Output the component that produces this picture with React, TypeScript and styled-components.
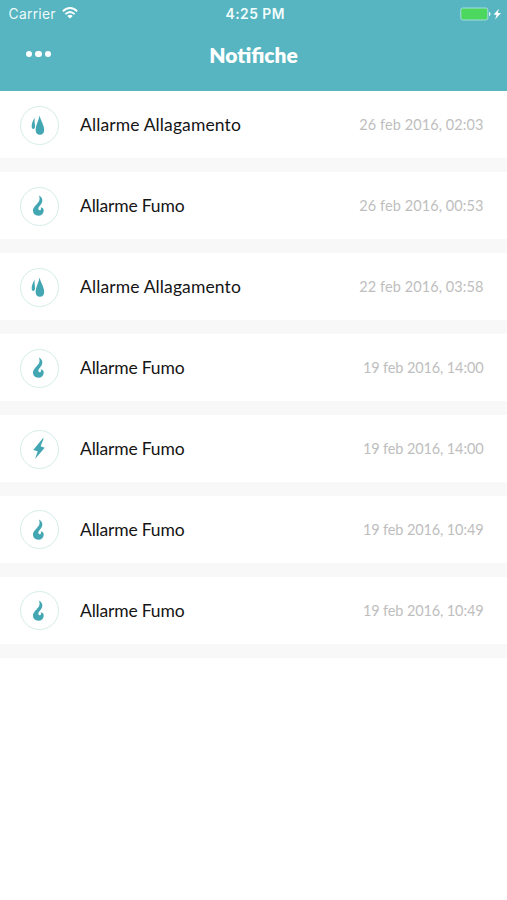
import React from 'react';
import styled, { createGlobalStyle } from 'styled-components';

type AlarmKind = 'flood' | 'smoke' | 'power';

interface Notification {
  id: number;
  kind: AlarmKind;
  title: string;
  date: string;
}

const notifications: Notification[] = [
  { id: 1, kind: 'flood', title: 'Allarme Allagamento', date: '26 feb 2016, 02:03' },
  { id: 2, kind: 'smoke', title: 'Allarme Fumo', date: '26 feb 2016, 00:53' },
  { id: 3, kind: 'flood', title: 'Allarme Allagamento', date: '22 feb 2016, 03:58' },
  { id: 4, kind: 'smoke', title: 'Allarme Fumo', date: '19 feb 2016, 14:00' },
  { id: 5, kind: 'power', title: 'Allarme Fumo', date: '19 feb 2016, 14:00' },
  { id: 6, kind: 'smoke', title: 'Allarme Fumo', date: '19 feb 2016, 10:49' },
  { id: 7, kind: 'smoke', title: 'Allarme Fumo', date: '19 feb 2016, 10:49' },
];

const GlobalStyle = createGlobalStyle`
  * { box-sizing: border-box; }
  body { margin: 0; background: #fff; }
`;

const Screen = styled.div`
  min-height: 900px;
  background: #fff;
  font-family: Lato, 'Open Sans', sans-serif;
`;

const Header = styled.header`
  height: 91px;
  background: #56b5c1;
  color: #fff;
`;

const StatusBar = styled.div`
  display: grid;
  grid-template-columns: 1fr auto 1fr;
  align-items: center;
  height: 28px;
  padding: 0 5px 0 8.5px;
  font-family: Inter, sans-serif;
  line-height: 28px;
`;

const Carrier = styled.div`
  display: flex;
  align-items: center;
  gap: 6px;
  font-size: 13.8px;
  letter-spacing: 0.3px;
  color: #eefafa;

  svg {
    margin-bottom: 2px;
  }
`;

const Clock = styled.div`
  font-size: 13.8px;
  font-weight: 600;
  letter-spacing: 0.5px;
  color: #f2fdfd;
`;

const Power = styled.div`
  display: flex;
  justify-content: flex-end;
  align-items: center;
  padding-bottom: 1px;
`;

const NavBar = styled.div`
  display: grid;
  grid-template-columns: 1fr auto 1fr;
  align-items: center;
  height: 53px;
  padding: 0 24px;
`;

const MenuButton = styled.button`
  display: flex;
  gap: 3px;
  width: 29px;
  height: 24px;
  padding: 0 0 1px 1.5px;
  align-items: center;
  border: 0;
  background: none;
`;

const MenuDot = styled.span`
  flex: none;
  width: 6.6px;
  height: 6.6px;
  border-radius: 50%;
  background: #fff;
`;

const Title = styled.h1`
  margin: 0;
  font-size: 21px;
  font-weight: 800;
  line-height: 28px;
`;

const List = styled.ul`
  margin: 0;
  padding: 0;
  list-style: none;
`;

const Row = styled.li`
  display: flex;
  align-items: center;
  height: 80.95px;
  padding: 1.6px 23.5px 0 19.5px;
  border-bottom: 14px solid #f8f8f8;
`;

const IconRing = styled.span`
  display: flex;
  width: 39px;
  height: 39px;
  margin-right: 21.5px;
  border: 1.5px solid #d5edea;
  border-radius: 50%;
  align-items: center;
  justify-content: center;
`;

const Label = styled.span<{ $tracking: number }>`
  flex: 1;
  font-size: 17.5px;
  line-height: 24px;
  color: #151515;
  letter-spacing: ${({ $tracking }) => $tracking}px;
`;

const Timestamp = styled.time<{ $tight: boolean }>`
  font-size: 14.5px;
  line-height: 20px;
  color: #bebebe;
  letter-spacing: ${({ $tight }) => ($tight ? '-0.12px' : '0.08px')};
`;

const labelTracking: Record<AlarmKind, number> = { flood: 0.12, smoke: -0.18, power: -0.18 };

const glyphs: Record<AlarmKind, React.ReactNode> = {
  flood: (
    <>
      <path d="M16.600 6.500c.8 4.600 4.600 9.600 4.600 14.200 0 3.200-1.700 5.100-4.300 5.100s-4.300-1.900-4.300-5.100c0-4.600 3.300-9.500 4-14.200z" />
      <path d="M11.700 8.800c-1.800 2.600-3 5.700-3 8.500 0 1.700.6 2.700 1.500 2.700 1.100 0 1.800-1 1.800-2.500 0-2.800-.8-5.600-.3-8.700z" />
    </>
  ),
  smoke: (
    <path d="M16 5.600c3.500 2 4.400 5.400 2 8.700-1.500 2.100-3.200 3.400-2.600 5 .6 1.300 2.500 1 2.600-.4.100-.6-.1-1-.5-1.300 2.200-.2 3.400 1.200 3.200 3.300-.3 2.900-2.400 4.800-5.300 4.800-3.400 0-5.700-2.300-5.400-5.600.2-2.400 1.700-3.900 3.500-5.700 2.700-2.600 3.900-4.900 2.500-8.800z" />
  ),
  power: <path d="M19.900 5.300 10.200 16.900l4.500 1.400-2.700 7.700 9.700-11.300-4.100-1.500 3.100-7.600z" />,
};

const AlarmIcon = ({ kind }: { kind: AlarmKind }) => (
  <svg width="32" height="32" viewBox="0 0 32 32" fill="#43a6b3" aria-hidden="true">
    {glyphs[kind]}
  </svg>
);

const WifiIcon = () => (
  <svg width="16" height="12" viewBox="0 0 16 12" fill="none" stroke="#fff" strokeWidth="1.900" aria-hidden="true">
    <path d="M.9 4.300C5-.1 11-.1 15.100 4.300M3.400 7.100c2.800-2.700 6.400-2.700 9.200 0" />
    <path d="M8 11.600 5.300 8.900c1.600-1.400 3.800-1.400 5.400 0z" fill="#fff" stroke="none" />
  </svg>
);

const BatteryIcon = () => (
  <svg width="42" height="14" viewBox="0 0 42 14" aria-hidden="true">
    <rect x="0.800" y="1" width="27" height="12" rx="2" fill="#4cd75f" stroke="#a5dcdf" />
    <path d="M29 5c2 .4 2 3.600 0 4z" fill="#e4f8f8" />
    <path d="M38.900 1.700 33.600 7.700h3l-1.500 4.800L41 6.100h-3.200z" fill="#fff" />
  </svg>
);

export default function App() {
  return (
    <Screen>
      <GlobalStyle />
      <Header>
        <StatusBar>
          <Carrier>
            Carrier
            <WifiIcon />
          </Carrier>
          <Clock>4:25 PM</Clock>
          <Power>
            <BatteryIcon />
          </Power>
        </StatusBar>
        <NavBar>
          <MenuButton aria-label="Menu">
            <MenuDot />
            <MenuDot />
            <MenuDot />
          </MenuButton>
          <Title>Notifiche</Title>
        </NavBar>
      </Header>
      <List>
        {notifications.map(({ id, kind, title, date }) => (
          <Row key={id}>
            <IconRing>
              <AlarmIcon kind={kind} />
            </IconRing>
            <Label $tracking={labelTracking[kind]}>{title}</Label>
            <Timestamp $tight={date.startsWith('19')}>{date}</Timestamp>
          </Row>
        ))}
      </List>
    </Screen>
  );
}
